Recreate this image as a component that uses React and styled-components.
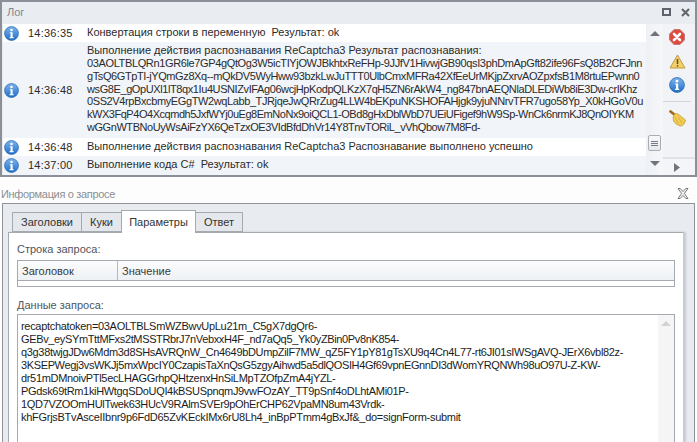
import React from "react";
import styled, { createGlobalStyle } from "styled-components";

const Global = createGlobalStyle`
  html, body { margin: 0; padding: 0; width: 697px; height: 442px; overflow: hidden; background: #fff; }
  body { font-family: "Liberation Sans", Arial, sans-serif; font-size: 11px; color: #2b2b2b; }
`;

const Page = styled.div`
  width: 697px; height: 442px; display: flex; flex-direction: column; overflow: hidden;
`;
const LogPanel = styled.section`
  height: 177px; box-sizing: border-box; flex: none; display: flex; flex-direction: column;
  border: 2px solid #8b8f97; background: #e9edf2;
`;
const LogHeader = styled.header`
  height: 22px; flex: none; display: flex; align-items: center; justify-content: space-between;
  padding: 0 5px 2px 5px; box-sizing: border-box; color: #7d8591; font-size: 11px;
`;
const HeaderActions = styled.div`
  display: flex; align-items: center; gap: 10px;
`;
const LogBody = styled.div`
  flex: 1; display: flex; min-height: 0;
`;
const LogList = styled.div`
  width: 643px; flex: none; background: #fff; overflow: hidden; margin-left: 1px;
`;
const LogRow = styled.div`
  display: flex; align-items: center; height: ${p => p.$h}px; box-sizing: border-box;
  background: ${p => (p.$alt ? "#f1f4f9" : "#fff")};
`;
const RowIcon = styled.div`
  width: 25px; flex: none; padding-left: 1px; box-sizing: border-box; display: flex; align-items: center;
`;
const Time = styled.div`
  width: 59px; flex: none; letter-spacing: 0.22px; padding-bottom: 1px; box-sizing: border-box;
`;
const Message = styled.div`
  white-space: pre; line-height: 12.8px; padding-bottom: 2px;
`;
const TokenLine = styled.div`
  letter-spacing: ${p => p.$track}px;
`;
const Scroll = styled.div`
  width: 17px; flex: none; background: linear-gradient(90deg, #eef0f4, #f6f7f9); display: flex; flex-direction: column;
  align-items: center; padding: 6px 0 8px; box-sizing: border-box;
`;
const ScrollTrack = styled.div`
  flex: 1; display: flex; flex-direction: column; justify-content: flex-end; padding-bottom: 9px;
`;
const Thumb = styled.div`
  width: 13px; height: 16px; box-sizing: border-box; border: 1px solid #a9adb4; border-radius: 2px;
  background: linear-gradient(#f8f9fa, #e6e8ec); display: flex; flex-direction: column; align-items: center;
  justify-content: center; gap: 1px;
`;
const Grip = styled.i`
  display: block; width: 7px; height: 1px; background: #777c84;
`;
const Side = styled.aside`
  width: 32px; flex: none; display: flex; flex-direction: column; background: #f1f3f6;
`;
const SideTools = styled.div`
  flex: 1; display: flex; flex-direction: column; align-items: center; padding: 5px 4px 0 0; gap: 8px;
`;
const SideSep = styled.div`
  width: 28px; height: 1px; background: #d3d6db; flex: none;
`;
const SideFoot = styled.div`
  height: 18px; flex: none; border-top: 2px solid #dfe2e7; display: flex; align-items: center; justify-content: center;
  padding-right: 4px; background: #f4f5f8; box-sizing: border-box;
`;

const InfoHeader = styled.header`
  height: 26px; flex: none; display: flex; align-items: center; justify-content: space-between; padding: 7px 8px 0 1px;
  box-sizing: border-box; color: #8b8e93; background: #fdfdfd; letter-spacing: -0.33px;
`;
const Group = styled.section`
  flex: 1; min-height: 0; margin: 0 2px; border: 1px solid #8f9299; border-bottom: 0; background: #e8ebf0;
  padding: 6px 10px 0 5px; display: flex; flex-direction: column;
`;
const Tabs = styled.div`
  display: flex; align-items: flex-end; height: 22px; flex: none; padding-left: 4px; position: relative; z-index: 1;
`;
const Tab = styled.div`
  box-sizing: border-box; width: ${p => p.$w}px; height: ${p => (p.$active ? 23 : 20)}px;
  display: flex; align-items: center; justify-content: center; margin-right: -1px;
  border: 1px solid #a5a9b0; background: ${p => (p.$active ? "#fff" : "#e4e7ec")};
  ${p => (p.$active ? "border-bottom: 0; margin-bottom: -1px; position: relative; z-index: 2;" : "")}
  color: #333;
`;
const TabPanel = styled.div`
  flex: 1; min-height: 0; background: #fff; border: 1px solid #a5a9b0; border-bottom: 0; border-right-color: #c8cbd1;
  box-shadow: 2px 0 2px #c6c9cf; padding: 9px 8px 0 8px; display: flex; flex-direction: column;
`;
const FieldLabel = styled.div`
  color: #50555c; height: 14px; line-height: 14px; flex: none;
`;
const Table = styled.div`
  margin-top: 4px; flex: none; height: 27px; box-sizing: border-box; border: 1px solid #a6a9b0;
`;
const TableHead = styled.div`
  display: flex; height: 20px; box-sizing: border-box; border-bottom: 1px solid #a6a9b0;
  background: linear-gradient(#fbfcfd, #eef1f5);
`;
const HeadCell = styled.div`
  width: ${p => p.$w || "auto"}; flex: ${p => (p.$w ? "none" : 1)}; box-sizing: border-box; padding-left: 4px;
  display: flex; align-items: center; color: #3a3a3a;
  ${p => (p.$w ? "border-right: 1px solid #b4b7bd;" : "")}
`;
const DataLabel = styled(FieldLabel)`
  margin-top: 11px;
`;
const DataBox = styled.div`
  margin-top: 2px; flex: 1; min-height: 0; border: 1px solid #a6a9b0; border-bottom: 0; display: flex;
`;
const DataText = styled.div`
  flex: 1; padding: 5px 0 0 3px; white-space: pre; line-height: 13px; color: #1c1c1c; overflow: hidden;
`;
const DataLine = styled.div`
  letter-spacing: ${p => p.$track}px;
`;
const DataScroll = styled.div`
  width: 16px; flex: none; background: #f5f5f5; display: flex; justify-content: center; padding-top: 5px; box-sizing: border-box;
`;

const InfoIcon = ({ size = 15 }) => (
  <svg width={size} height={size} viewBox="0 0 16 16">
    <defs>
      <linearGradient id="ig" x1="0" y1="0" x2="0" y2="1">
        <stop offset="0" stopColor="#7db4ec" /><stop offset="1" stopColor="#1f6fca" />
      </linearGradient>
    </defs>
    <circle cx="8" cy="8" r="7.4" fill="url(#ig)" stroke="#2a68ad" strokeWidth="0.8" />
    <circle cx="8" cy="4.2" r="1.4" fill="#fff" />
    <path d="M6.2 6.6h3v5.2h1v1.2H6v-1.2h1V7.8h-.8z" fill="#fff" />
  </svg>
);
const ErrorIcon = () => (
  <svg width="16" height="16" viewBox="0 0 16 16">
    <path d="M5 .6h6L15.4 5v6L11 15.4H5L.6 11V5z" fill="#e0483d" stroke="#c0766f" strokeWidth="1" strokeLinejoin="round" />
    <path d="M5 5l6 6M11 5l-6 6" stroke="#fff" strokeWidth="2.6" strokeLinecap="round" />
  </svg>
);
const WarnIcon = () => (
  <svg width="17" height="16" viewBox="0 0 17 16">
    <path d="M8.5 2L16 15H1z" fill="#f5cf6a" stroke="#c09a42" strokeLinejoin="round" />
    <path d="M8.5 6v5" stroke="#6a5320" strokeWidth="1.6" />
    <circle cx="8.5" cy="12.8" r="0.9" fill="#6a5320" />
  </svg>
);
const BroomIcon = () => (
  <svg width="17" height="17" viewBox="0 0 17 17">
    <path d="M1.5 1.5L6 5" stroke="#a2691e" strokeWidth="2.8" strokeLinecap="round" />
    <path d="M5 4.5c2-1.5 4-.8 6 1 2 1.700 4 3.500 5.500 4.500-.5 3-2 5.500-4.500 6-3-.5-6-2.500-7.500-5-.5-2.500-.5-4.500.5-6.500z" fill="#f0cc55" stroke="#c39c30" strokeWidth="0.8" strokeLinejoin="round" />
    <path d="M6 6.500l3 7M9 6.500l4 7" stroke="#d3a935" strokeWidth="0.7" />
  </svg>
);
const Arrow = ({ dir, color = "#6f747c" }) => {
  const pts = { up: "0,6 5,1 10,6", down: "0,1 5,6 10,1", right: "2,0 8,4.5 2,9" }[dir];
  const box = dir === "right" ? "0 0 10 9" : "0 0 10 7";
  return (
    <svg width="10" height={dir === "right" ? 9 : 7} viewBox={box} style={{ flex: "none" }}><polygon points={pts} fill={color} /></svg>
  );
};
const MaxIcon = () => (
  <svg width="9" height="8" viewBox="0 0 9 8"><rect x="1" y="1" width="7" height="6" fill="none" stroke="#5f646c" strokeWidth="2" /></svg>
);
const CloseIcon = () => (
  <svg width="9" height="9" viewBox="0 0 9 9"><path d="M1 1l7 7M8 1L1 8" stroke="#5f646c" strokeWidth="2" /></svg>
);
const OutlineClose = () => (
  <svg width="12" height="11" viewBox="0 0 12 11">
    <path d="M1 .5h2.2L6 3.6 8.8.5H11L7.4 5.5 11 10.5H8.8L6 7.4 3.2 10.5H1L4.6 5.5z" fill="#f4f4f4" stroke="#555a60" strokeWidth="0.8" />
  </svg>
);

const tokenLines = [
  ["03AOLTBLQRn1GR6le7GP4gQtOg3W5icTIYjOWJBkhtxReFHp-9JJfV1HivwjGB90qsI3phDmApGft82ife96FsQ8B2CFJnn", -0.365],
  ["gTsQ6GTpTI-jYQmGz8Xq--mQkDV5WyHww93bzkLwJuTTT0UlbCmxMFRa42XfEeUrMKjpZxrvAOZpxfsB1M8rtuEPwnn0", -0.4],
  ["wsG8E_gOpUXl1lT8qx1Iu4USNIZvIFAg06wcjHpKodpQLKzX7qH5ZN6rAkW4_ng847bnAEQNlaDLEDiWb8iE3Dw-crIKhz", -0.405],
  ["0SS2V4rpBxcbmyEGgTW2wqLabb_TJRjqeJwQRrZug4LLW4bEKpuNKSHOFAHjgk9yjuNNrvTFR7ugo58Yp_X0kHGoV0u", -0.39],
  ["kWX3FqP4O4Xcqmdh5JxfWYj0uEg8EmNoNx9oiQCL1-OBd8gHxDblWbD7UEiUFigef9hW9Sp-WnCk6nrmKJ8QnOIYKM", -0.467],
  ["wGGnWTBNoUyWsAiFzYX6QeTzxOE3VIdBfdDhVr14Y8TnvTORiL_vVhQbow7M8Fd-", -0.44],
];

const rows = [
  { h: 18, time: "14:36:35", msg: "Конвертация строки в переменную  Результат: ok" },
  { h: 96, alt: true, time: "14:36:48", msg: "Выполнение действия распознавания ReCaptcha3 Результат распознавания:", tokens: tokenLines },
  { h: 18, time: "14:36:48", msg: "Выполнение действия распознавания ReCaptcha3 Распознавание выполнено успешно" },
  { h: 19, alt: true, time: "14:37:00", msg: "Выполнение кода C#  Результат: ok" },
];

const requestData = [
  ["recaptchatoken=03AOLTBLSmWZBwvUpLu21m_C5gX7dgQr6-", -0.31],
  ["GEBv_eySYmTttMFxs2tMSSTRbrJ7nVebxxH4F_nd7aQq5_Yk0yZBin0Pv8nK854-", -0.36],
  ["q3g38twjgJDw6Mdm3d8SHsAVRQnW_Cn4649bDUmpZilF7MW_qZ5FY1pY81gTsXU9q4Cn4L77-rt6JI01sIWSgAVQ-JErX6vbl82z-", -0.33],
  ["3KSEPWegj3vsWKJj5mxWpcIY0CzapisTaXnQsG5zgyAihwd5a5dlQOSIH4Gf69vpnEGnnDI3dWomYRQNWh98uO97U-Z-KW-", -0.37],
  ["dr51mDMnoivPTl5ecLHAGGrhpQHtzenxHnSiLMpTZOfpZmA4jYZL-", -0.33],
  ["PGdsk69tRm1kiHWtgqSDoUQI4kBSUSpnqmJ9vwFOzAY_TT9pSnf4oDLhtAMi01P-", -0.33],
  ["1QD7VZOOmHUlTwek63HUcV9RAlmSVEr9pOhErCHP62VpaMN8um43Vrdk-", -0.33],
  ["khFGrjsBTvAsceIIbnr9p6FdD65ZvKEckIMx6rU8Lh4_inBpPTmm4gBxJf&_do=signForm-submit", -0.285],
];

export default function App() {
  return (
    <Page>
      <Global />
      <LogPanel>
        <LogHeader>
          <span>Лог</span>
          <HeaderActions><MaxIcon /><CloseIcon /></HeaderActions>
        </LogHeader>
        <LogBody>
          <LogList>
            {rows.map((r, i) => (
              <LogRow key={i} $h={r.h} $alt={r.alt}>
                <RowIcon><InfoIcon /></RowIcon>
                <Time>{r.time}</Time>
                <Message>
                  {r.msg}
                  {r.tokens && r.tokens.map(([t, track]) => <TokenLine key={t} $track={track}>{t}</TokenLine>)}
                </Message>
              </LogRow>
            ))}
          </LogList>
          <Scroll>
            <Arrow dir="up" />
            <ScrollTrack>
              <Thumb><Grip /><Grip /><Grip /></Thumb>
            </ScrollTrack>
            <Arrow dir="down" />
          </Scroll>
          <Side>
            <SideTools>
              <ErrorIcon />
              <WarnIcon />
              <InfoIcon size={16} />
              <SideSep />
              <BroomIcon />
            </SideTools>
            <SideFoot><Arrow dir="right" /></SideFoot>
          </Side>
        </LogBody>
      </LogPanel>
      <InfoHeader>
        <span>Информация о запросе</span>
        <OutlineClose />
      </InfoHeader>
      <Group>
        <Tabs>
          <Tab $w={70}>Заголовки</Tab>
          <Tab $w={41}>Куки</Tab>
          <Tab $w={75} $active>Параметры</Tab>
          <Tab $w={48}>Ответ</Tab>
        </Tabs>
        <TabPanel>
          <FieldLabel>Строка запроса:</FieldLabel>
          <Table>
            <TableHead>
              <HeadCell $w="100px">Заголовок</HeadCell>
              <HeadCell>Значение</HeadCell>
            </TableHead>
          </Table>
          <DataLabel>Данные запроса:</DataLabel>
          <DataBox>
            <DataText>
              {requestData.map(([t, track]) => <DataLine key={t} $track={track}>{t}</DataLine>)}
            </DataText>
            <DataScroll><Arrow dir="up" color="#cfd1d4" /></DataScroll>
          </DataBox>
        </TabPanel>
      </Group>
    </Page>
  );
}
